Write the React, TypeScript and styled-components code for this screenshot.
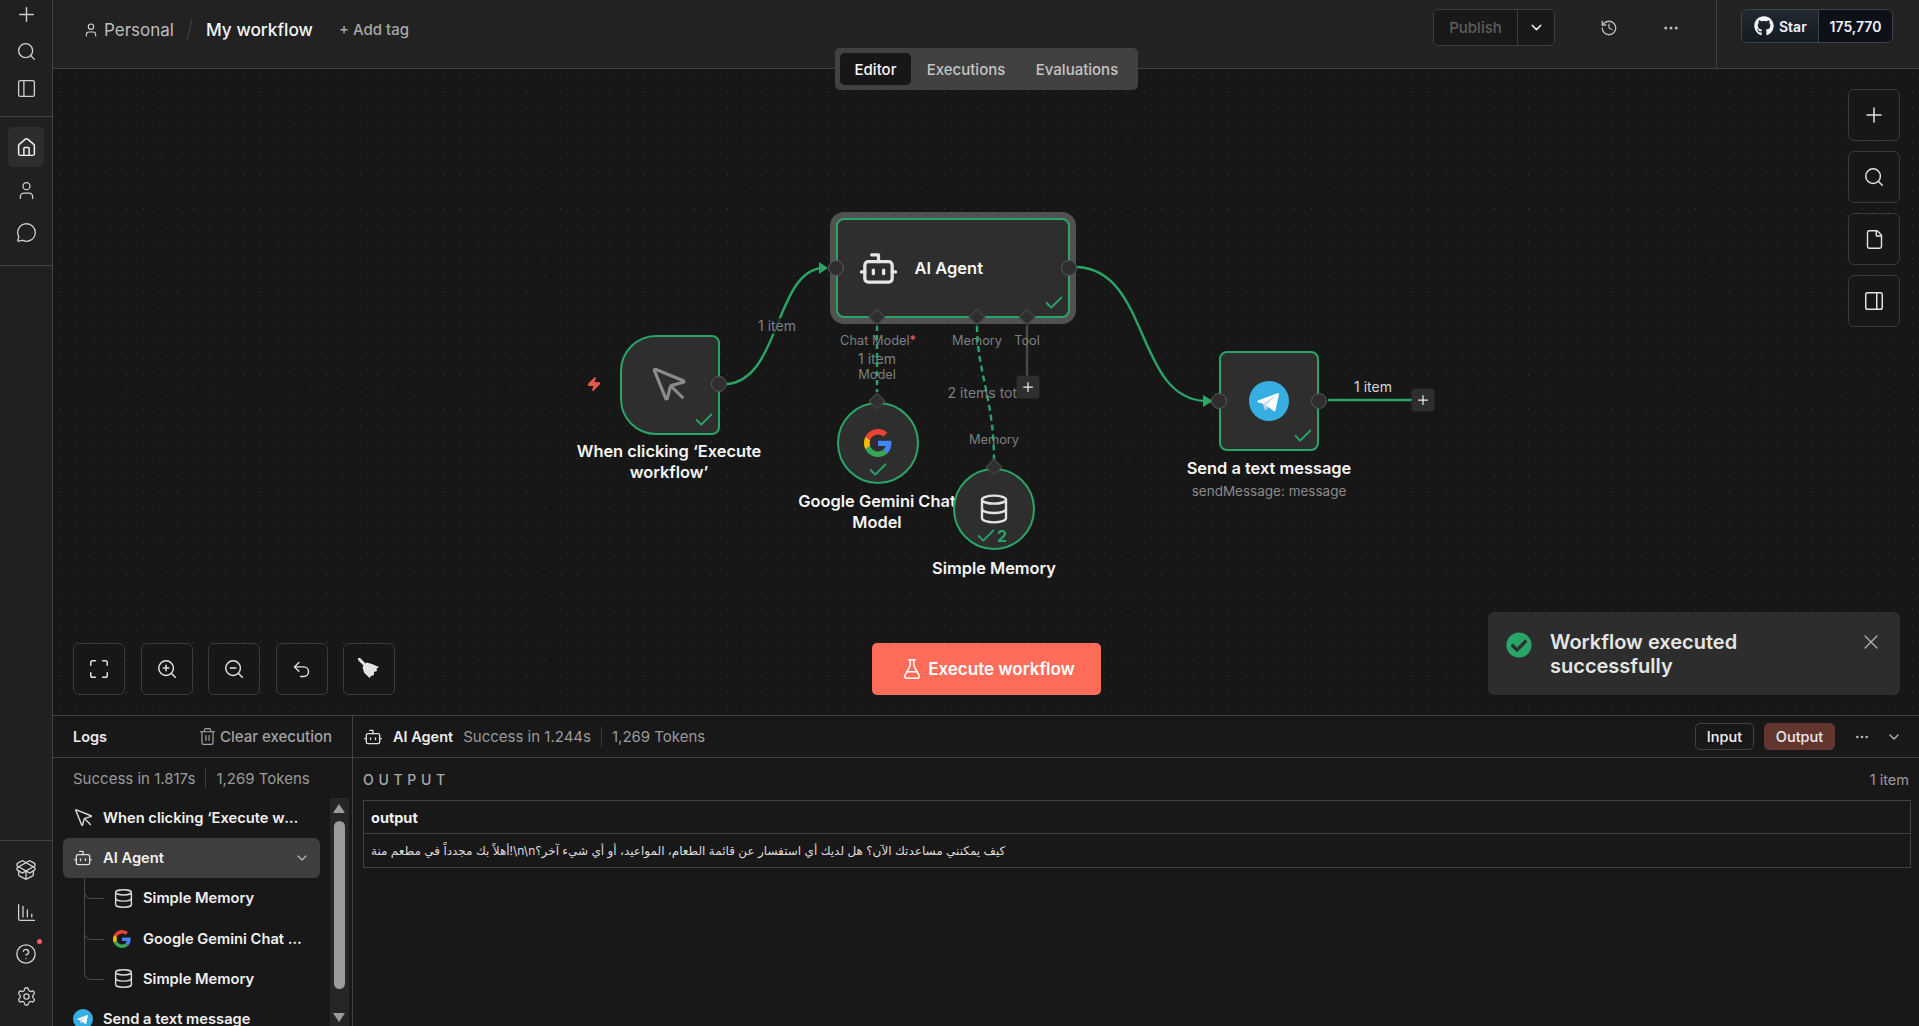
import React from "react";
import styled, { createGlobalStyle } from "styled-components";
import {
  Plus, Search, PanelLeft, PanelRight, House, User, MessageCircle, PackageOpen,
  ChartColumnDecreasing, CircleHelp, Settings, History, Ellipsis, ChevronDown,
  Maximize, ZoomIn, ZoomOut, Undo2, File, Trash2, FlaskConical, Check, X, Bot,
  Database, MousePointer, Zap,
} from "lucide-react";
import { FaCheckCircle, FaGithub } from "react-icons/fa";

const GREEN = "#29a568";
const LINE = "#414141";
// canvas origin in page coordinates, nodes below are given in page coordinates
const OX = 53;
const OY = 69;

const GlobalStyle = createGlobalStyle`
  html, body {
    margin: 0;
    background: #171717;
    font-family: Inter, "Noto Sans", sans-serif;
    color: #e8e8e8;
    overflow: hidden;
  }
  * { box-sizing: border-box; }
`;

const Page = styled.div`
  display: flex;
  width: 1919px;
  height: 1026px;
`;

const Sidebar = styled.aside`
  width: 53px;
  flex-shrink: 0;
  display: flex;
  flex-direction: column;
  background: #202020;
  border-right: 1px solid ${LINE};
`;

const SideGroup = styled.div<{ $h: number; $border?: boolean; $pad: number; $gap: number }>`
  height: ${(p) => p.$h}px;
  display: flex;
  flex-direction: column;
  align-items: center;
  gap: ${(p) => p.$gap}px;
  padding-top: ${(p) => p.$pad}px;
  border-bottom: ${(p) => (p.$border ? `1px solid ${LINE}` : "none")};
`;

const SideSpacer = styled.div`
  flex: 1;
  border-bottom: 1px solid ${LINE};
`;

const SideItem = styled.div<{ $active?: boolean }>`
  position: relative;
  width: 36px;
  height: ${(p) => (p.$active ? 40 : 24)}px;
  margin-bottom: ${(p) => (p.$active ? -7 : 0)}px;
  display: flex;
  align-items: center;
  justify-content: center;
  border-radius: 5px;
  color: ${(p) => (p.$active ? "#f2f2f2" : "#cfcfcf")};
  background: ${(p) => (p.$active ? "#2d2d2d" : "transparent")};
`;

const RedDot = styled.span`
  position: absolute;
  top: -3px;
  right: 2px;
  width: 5px;
  height: 5px;
  border-radius: 50%;
  background: #f0606e;
`;

const Main = styled.div`
  position: relative;
  flex: 1;
  min-width: 0;
  display: flex;
  flex-direction: column;
`;

const Header = styled.header`
  height: 69px;
  flex-shrink: 0;
  display: flex;
  align-items: stretch;
  background: #222222;
  border-bottom: 1px solid ${LINE};
`;

const Breadcrumb = styled.div`
  display: flex;
  align-items: center;
  height: 59px;
  padding-left: 30px;
`;

const Crumb = styled.span<{ $strong?: boolean }>`
  font-size: ${(p) => (p.$strong ? 17.3 : 17)}px;
  color: ${(p) => (p.$strong ? "#f5f5f5" : "#bdbdbd")};
  font-weight: ${(p) => (p.$strong ? 500 : 400)};
`;

const PersonalIcon = styled(User)`
  color: #cfcfcf;
  margin-right: 5px;
`;

const Slash = styled.span`
  width: 1px;
  height: 22px;
  margin: 0 15.5px;
  background: #4a4a4a;
  transform: rotate(12deg);
`;

const AddTag = styled.span`
  margin-left: 26px;
  font-size: 15px;
  font-weight: 500;
  color: #a8a8a8;
`;

const HeaderRight = styled.div`
  margin-left: auto;
  display: flex;
  align-items: flex-start;
  padding-top: 9px;
`;

const PublishGroup = styled.div`
  display: flex;
  width: 122px;
  height: 37px;
  border: 1px solid #3d3d3d;
  border-radius: 5px;
  background: #191919;
  overflow: hidden;
`;

const PublishLabel = styled.span`
  flex: 1;
  display: flex;
  align-items: center;
  justify-content: center;
  font-size: 15px;
  font-weight: 500;
  color: #5e5e5e;
`;

const PublishCaret = styled.span`
  width: 37px;
  display: flex;
  align-items: center;
  justify-content: center;
  color: #e8e8e8;
  border-left: 1px solid #3d3d3d;
`;

const HeaderIcon = styled.span<{ $ml: number }>`
  margin-left: ${(p) => p.$ml}px;
  height: 37px;
  display: flex;
  align-items: center;
  color: #bdbdbd;
`;

const StarSection = styled.div`
  margin-left: 36px;
  width: 203px;
  height: 68px;
  margin-top: -9px;
  padding: 9px 26px 0 24px;
  border-left: 1px solid ${LINE};
`;

const StarBadge = styled.div`
  display: flex;
  height: 34px;
  border: 1px solid #3d444d;
  border-radius: 6px;
  overflow: hidden;
  font-size: 14px;
  font-weight: 600;
  color: #f0f6fc;
`;

const StarLeft = styled.div`
  width: 77px;
  display: flex;
  align-items: center;
  gap: 5px;
  padding-left: 12px;
  background: linear-gradient(180deg, #212830, #151b23);
  border-right: 1px solid #3d444d;
`;

const StarCount = styled.div`
  flex: 1;
  display: flex;
  align-items: center;
  justify-content: center;
  background: #0d1117;
`;

const Tabs = styled.nav`
  position: absolute;
  left: 782px;
  top: 48px;
  z-index: 5;
  width: 303px;
  height: 42px;
  display: flex;
  align-items: center;
  padding: 0 5px;
  background: #414141;
  border-radius: 5px;
  font-size: 15px;
  font-weight: 500;
`;

const Tab = styled.span<{ $active?: boolean; $w: number }>`
  width: ${(p) => p.$w}px;
  height: 32px;
  display: flex;
  align-items: center;
  justify-content: center;
  border-radius: 5px;
  color: ${(p) => (p.$active ? "#f7f7f7" : "#c4c4c4")};
  background: ${(p) => (p.$active ? "#171717" : "transparent")};
`;

const Canvas = styled.section`
  position: relative;
  flex: 1;
  overflow: hidden;
  background-color: #171717;
  background-image: radial-gradient(circle, #424242 0.7px, transparent 0.9px);
  background-size: 16.7px 16.7px;
  background-position: -1.35px -2.35px;
`;

const Edges = styled.svg`
  position: absolute;
  left: 0;
  top: 0;
  width: 1866px;
  height: 646px;
`;

const NodeBox = styled.div<{
  $x: number;
  $y: number;
  $w: number;
  $h: number;
  $radius: string;
  $ring?: boolean;
  $start?: boolean;
}>`
  position: absolute;
  left: ${(p) => p.$x - OX}px;
  top: ${(p) => p.$y - OY}px;
  width: ${(p) => p.$w}px;
  height: ${(p) => p.$h}px;
  display: flex;
  align-items: center;
  justify-content: ${(p) => (p.$start ? "flex-start" : "center")};
  padding-left: ${(p) => (p.$start ? 19.5 : 0)}px;
  background: #2e2e2e;
  border: 2px solid ${GREEN};
  border-radius: ${(p) => p.$radius};
  box-shadow: ${(p) => (p.$ring ? "0 0 0 6px #515151" : "none")};
`;

const NodeCheck = styled.span<{ $right?: number; $bottom?: number }>`
  position: absolute;
  right: ${(p) => p.$right ?? 3}px;
  bottom: ${(p) => p.$bottom ?? 2}px;
  display: flex;
  align-items: center;
  color: ${GREEN};
  font-size: 16px;
  font-weight: 700;
`;

const AgentName = styled.span`
  margin-left: 16px;
  font-size: 16.5px;
  font-weight: 600;
  color: #f5f5f5;
`;

const Placed = styled.div<{ $x: number; $y: number }>`
  position: absolute;
  left: ${(p) => p.$x - OX}px;
  top: ${(p) => p.$y - OY}px;
  transform: translate(-50%, -50%);
`;

const Port = styled(Placed)`
  width: 16px;
  height: 16px;
  border-radius: 50%;
  background: #2e2e2e;
  border: 1px solid #595959;
`;

const Diamond = styled(Placed)`
  width: 12px;
  height: 12px;
  background: #2e2e2e;
  border: 1px solid #4a4a4a;
  transform: translate(-50%, -50%) rotate(45deg);
`;

const Title = styled(Placed)`
  width: 200px;
  text-align: center;
  font-size: 16.4px;
  line-height: 21px;
  font-weight: 600;
  color: #f5f5f5;
`;

const Subtitle = styled(Placed)`
  white-space: nowrap;
  font-size: 13.5px;
  color: #8a8a8a;
`;

const PortLabel = styled(Placed)`
  white-space: nowrap;
  font-size: 12.8px;
  line-height: 16px;
  color: #7c7f84;
`;

const ItemLabel = styled(Placed)<{ $light?: boolean; $solid?: boolean }>`
  white-space: nowrap;
  font-size: 14px;
  line-height: 16px;
  padding: 0 2px;
  color: ${(p) => (p.$light ? "#d6d6d6" : "#7c7f84")};
  background: ${(p) => (p.$solid ? "rgba(23,23,23,.75)" : "transparent")};
`;

const Required = styled.span`
  color: #f0606e;
`;

const AddBox = styled(Placed)`
  width: 23px;
  height: 23px;
  display: flex;
  align-items: center;
  justify-content: center;
  border-radius: 4px;
  background: #2e2e2e;
  color: #ececec;
`;

const Bolt = styled(Placed)`
  display: flex;
  color: #e5594c;
`;

const ToolColumn = styled.div<{ $side: "left" | "right"; $gap: number }>`
  position: absolute;
  display: flex;
  gap: ${(p) => p.$gap}px;
  ${(p) =>
    p.$side === "left"
      ? "left: 20px; bottom: 20px;"
      : "right: 19px; top: 20px; flex-direction: column;"}
`;

const ToolButton = styled.button`
  width: 52px;
  height: 52px;
  display: flex;
  align-items: center;
  justify-content: center;
  padding: 0;
  background: #171717;
  border: 1px solid #3a3a3a;
  border-radius: 6px;
  color: #e4e4e4;
`;

const ExecuteButton = styled.button`
  position: absolute;
  left: 819px;
  bottom: 20px;
  width: 229px;
  height: 52px;
  display: flex;
  align-items: center;
  justify-content: center;
  gap: 5px;
  padding-right: 3px;
  border: 0;
  border-radius: 5px;
  background: #ff6d5a;
  color: #fff;
  font-family: inherit;
  font-size: 17px;
  font-weight: 600;
`;

const Toast = styled.div`
  position: absolute;
  right: 19px;
  bottom: 20px;
  width: 412px;
  height: 83px;
  display: flex;
  align-items: flex-start;
  padding: 18px 17px 0 18px;
  border-radius: 6px;
  background: #2d2d2d;
  color: #e6e6e6;
`;

const ToastIcon = styled(FaCheckCircle)`
  color: ${GREEN};
  flex-shrink: 0;
  margin-top: 2px;
`;

const ToastText = styled.div`
  margin-left: 18px;
  width: 230px;
  font-size: 20px;
  line-height: 24px;
  font-weight: 600;
`;

const ToastClose = styled.span`
  margin-left: auto;
  display: flex;
  color: #b5b5b5;
`;

const LogsPanel = styled.section`
  height: 311px;
  flex-shrink: 0;
  display: flex;
  background: #181818;
  border-top: 1px solid ${LINE};
`;

const LogsColumn = styled.div`
  width: 300px;
  flex-shrink: 0;
  display: flex;
  flex-direction: column;
  border-right: 1px solid ${LINE};
  overflow: hidden;
`;

const PanelHead = styled.div`
  height: 42px;
  flex-shrink: 0;
  display: flex;
  align-items: center;
  border-bottom: 1px solid ${LINE};
`;

const LogsHead = styled(PanelHead)`
  justify-content: space-between;
  padding: 0 20px 0 20px;
`;

const HeadTitle = styled.span`
  font-size: 14.5px;
  font-weight: 600;
  color: #ececec;
`;

const ClearButton = styled.span`
  display: flex;
  align-items: center;
  gap: 3px;
  font-size: 15px;
  font-weight: 500;
  color: #a3a3a3;
`;

const Stats = styled.div`
  display: flex;
  align-items: center;
  font-size: 15px;
  color: #9a9a9a;
`;

const StatDivider = styled.span`
  width: 1px;
  height: 20px;
  margin: 0 10px;
  background: #3d3d3d;
`;

const LogsStats = styled(Stats)`
  height: 40px;
  flex-shrink: 0;
  padding-left: 20px;
`;

const TreeArea = styled.div`
  flex: 1;
  min-height: 0;
  display: flex;
`;

const TreeList = styled.div`
  width: 257px;
  margin-left: 10px;
`;

const TreeRow = styled.div<{ $active?: boolean; $child?: boolean; $last?: boolean }>`
  position: relative;
  height: 40.2px;
  display: flex;
  align-items: center;
  padding: 0 17px 0 ${(p) => (p.$child ? 50 : 10)}px;
  border-radius: 6px;
  background: ${(p) => (p.$active ? "#3e3e3e" : "transparent")};
  ${(p) =>
    p.$child
      ? `
  &::before {
    content: "";
    position: absolute;
    left: 21px;
    top: 0;
    width: 19px;
    height: 20px;
    border-left: 1.5px solid #4a4a4a;
    border-bottom: 1.5px solid #4a4a4a;
    border-bottom-left-radius: 7px;
  }`
      : ""}
  ${(p) =>
    p.$child && !p.$last
      ? `
  &::after {
    content: "";
    position: absolute;
    left: 21px;
    top: 0;
    bottom: 0;
    border-left: 1.5px solid #4a4a4a;
  }`
      : ""}
`;

const TreeIcon = styled.span`
  width: 30px;
  flex-shrink: 0;
  display: flex;
  color: #dcdcdc;
`;

const TreeText = styled.span`
  flex: 1;
  min-width: 0;
  white-space: nowrap;
  overflow: hidden;
  text-overflow: ellipsis;
  font-size: 14.7px;
  font-weight: 600;
  color: #f0f0f0;
`;

const TreeCaret = styled(ChevronDown)`
  position: absolute;
  right: 10px;
  color: #b5b5b5;
`;

const ScrollTrack = styled.div`
  position: relative;
  width: 19px;
  margin-left: 10px;
  background: #262626;
`;

const ScrollThumb = styled.div`
  position: absolute;
  left: 4px;
  top: 23px;
  width: 11px;
  height: 168px;
  border-radius: 6px;
  background: #9c9c9c;
`;

const ScrollArrow = styled.span<{ $down?: boolean }>`
  position: absolute;
  left: 3px;
  ${(p) => (p.$down ? "bottom: 4px;" : "top: 6px;")}
  width: 0;
  height: 0;
  border-left: 6.5px solid transparent;
  border-right: 6.5px solid transparent;
  ${(p) => (p.$down ? "border-top: 9px solid #9c9c9c;" : "border-bottom: 9px solid #9c9c9c;")}
`;

const OutputColumn = styled.div`
  flex: 1;
  min-width: 0;
  display: flex;
  flex-direction: column;
`;

const OutputHead = styled(PanelHead)`
  padding: 0 17px 0 10px;
`;

const OutputName = styled.span`
  margin-left: 10px;
  margin-right: 10px;
  font-size: 14.5px;
  font-weight: 600;
  color: #ececec;
`;

const HeadActions = styled.div`
  margin-left: auto;
  display: flex;
  align-items: center;
`;

const ModeButton = styled.span<{ $on?: boolean; $w: number }>`
  width: ${(p) => p.$w}px;
  height: 27px;
  margin-right: 10px;
  display: flex;
  align-items: center;
  justify-content: center;
  border-radius: 5px;
  font-size: 14.5px;
  font-weight: 500;
  color: ${(p) => (p.$on ? "#ececec" : "#f2f2f2")};
  background: ${(p) => (p.$on ? "#63352f" : "#181818")};
  border: 1px solid ${(p) => (p.$on ? "#63352f" : "#414141")};
`;

const HeadIcon = styled.span<{ $ml: number }>`
  margin-left: ${(p) => p.$ml}px;
  display: flex;
  color: #b5b5b5;
`;

const OutputBar = styled.div`
  height: 42px;
  flex-shrink: 0;
  display: flex;
  align-items: center;
  justify-content: space-between;
  padding: 0 10px;
`;

const OutputTitle = styled.span`
  font-size: 14px;
  font-weight: 500;
  letter-spacing: 4.7px;
  color: #a8a8a8;
`;

const ItemCount = styled.span`
  font-size: 14.5px;
  color: #9a9a9a;
`;

const DataTable = styled.div`
  margin: 0 8px 0 10px;
  border: 1px solid ${LINE};
`;

const DataHead = styled.div`
  height: 33px;
  display: flex;
  align-items: center;
  padding-left: 7px;
  font-size: 14.5px;
  font-weight: 700;
  color: #f0f0f0;
  border-bottom: 1px solid ${LINE};
`;

const DataCell = styled.div`
  height: 33px;
  display: flex;
  align-items: center;
  padding-left: 7px;
  font-family: Inter, "DejaVu Sans", sans-serif;
  font-size: 12px;
  color: #dcdcdc;
  white-space: nowrap;
`;

const GoogleIcon = ({ size }: { size: number }) => (
  <svg width={size} height={size} viewBox="0 0 48 48">
    <path fill="#EA4335" d="M24 9.5c3.54 0 6.71 1.22 9.21 3.6l6.85-6.85C35.9 2.38 30.47 0 24 0 14.62 0 6.51 5.38 2.56 13.22l7.98 6.19C12.43 13.72 17.74 9.5 24 9.5z" />
    <path fill="#4285F4" d="M46.98 24.55c0-1.57-.15-3.09-.38-4.55H24v9.02h12.94c-.58 2.96-2.26 5.48-4.78 7.18l7.73 6c4.51-4.18 7.09-10.36 7.09-17.65z" />
    <path fill="#FBBC05" d="M10.53 28.59c-.48-1.45-.76-2.99-.76-4.59s.27-3.14.76-4.59l-7.98-6.19C.92 16.46 0 20.12 0 24c0 3.88.92 7.54 2.56 10.78l7.97-6.19z" />
    <path fill="#34A853" d="M24 48c6.48 0 11.93-2.13 15.89-5.81l-7.73-6c-2.15 1.45-4.92 2.3-8.16 2.3-6.26 0-11.57-4.22-13.47-9.91l-7.98 6.19C6.51 42.62 14.62 48 24 48z" />
  </svg>
);

const TelegramIcon = ({ size }: { size: number }) => (
  <svg width={size} height={size} viewBox="0 0 240 240">
    <circle cx="120" cy="120" r="120" fill="#37aee2" />
    <path fill="#c8daea" d="M98 175c-3.888 0-3.227-1.468-4.568-5.17L82 132.207 170 80" />
    <path fill="#a9c9dd" d="M98 175c3 0 4.325-1.372 6-3l16-15.558-19.958-12.035" />
    <path fill="#fff" d="M100.04 144.41l48.36 35.729c5.519 3.045 9.501 1.468 10.876-5.123l19.685-92.763c2.015-8.08-3.08-11.746-8.36-9.349l-115.59 44.571c-7.89 3.165-7.843 7.567-1.438 9.528l29.663 9.259 68.673-43.325c3.242-1.966 6.218-.91 3.776 1.258" />
  </svg>
);

const BroomIcon = () => (
  <svg width="22" height="22" viewBox="0 0 22 22" fill="currentColor">
    <path d="M1 1l5.5 5.5" stroke="currentColor" strokeWidth="3" strokeLinecap="round" />
    <path d="M8.5 4.5L14 6l7 3-2.5 2 .5 2-3 1v3l-3 1-1.500 2L6 14.500 4.500 9z" />
  </svg>
);

const ARABIC =
  "أهلاً بك مجدداً في مطعم منة!\\n\\nكيف يمكنني مساعدتك الآن؟ هل لديك أي استفسار عن قائمة الطعام، المواعيد، أو أي شيء آخر؟";

export default function App() {
  return (
    <Page>
      <GlobalStyle />
      <Sidebar>
        <SideGroup $h={117} $border $pad={2} $gap={13}>
          <SideItem><Plus size={23} strokeWidth={1.5} /></SideItem>
          <SideItem><Search size={21} strokeWidth={1.5} /></SideItem>
          <SideItem><PanelLeft size={21} strokeWidth={1.5} /></SideItem>
        </SideGroup>
        <SideGroup $h={149} $border $pad={10} $gap={18}>
          <SideItem $active><House size={21} strokeWidth={1.7} /></SideItem>
          <SideItem><User size={21} strokeWidth={1.5} /></SideItem>
          <SideItem><MessageCircle size={21} strokeWidth={1.5} /></SideItem>
        </SideGroup>
        <SideSpacer />
        <SideGroup $h={185} $pad={17} $gap={18}>
          <SideItem><PackageOpen size={22} strokeWidth={1.5} /></SideItem>
          <SideItem><ChartColumnDecreasing size={21} strokeWidth={1.5} /></SideItem>
          <SideItem><CircleHelp size={22} strokeWidth={1.5} /><RedDot /></SideItem>
          <SideItem><Settings size={21} strokeWidth={1.5} /></SideItem>
        </SideGroup>
      </Sidebar>

      <Main>
        <Header>
          <Breadcrumb>
            <PersonalIcon size={16} strokeWidth={1.7} />
            <Crumb>Personal</Crumb>
            <Slash />
            <Crumb $strong>My workflow</Crumb>
            <AddTag>+ Add tag</AddTag>
          </Breadcrumb>
          <HeaderRight>
            <PublishGroup>
              <PublishLabel>Publish</PublishLabel>
              <PublishCaret><ChevronDown size={17} /></PublishCaret>
            </PublishGroup>
            <HeaderIcon $ml={45}><History size={18} strokeWidth={1.7} /></HeaderIcon>
            <HeaderIcon $ml={44}><Ellipsis size={18} /></HeaderIcon>
            <StarSection>
              <StarBadge>
                <StarLeft><FaGithub size={20} />Star</StarLeft>
                <StarCount>175,770</StarCount>
              </StarBadge>
            </StarSection>
          </HeaderRight>
        </Header>

        <Tabs>
          <Tab $active $w={71}>Editor</Tab>
          <Tab $w={110}>Executions</Tab>
          <Tab $w={112}>Evaluations</Tab>
        </Tabs>

        <Canvas>
          <Edges viewBox={`${OX} ${OY} 1866 646`} fill="none">
            <path d="M727 384 C780 380 775 272 822 268" stroke={GREEN} strokeWidth="2.4" />
            <polygon points="828,268 819,262 819,274" fill={GREEN} />
            <path d="M1077 267 C1150 270 1135 398 1205 401" stroke={GREEN} strokeWidth="2.4" />
            <polygon points="1213,401 1203,395 1203,407" fill={GREEN} />
            <path d="M1328 400 H1412" stroke={GREEN} strokeWidth="2.4" />
            <path d="M877 326 V392" stroke={GREEN} strokeWidth="2.4" strokeDasharray="5 4" />
            <path d="M977 326 C977 370 994 400 994 460" stroke={GREEN} strokeWidth="2.4" strokeDasharray="6 4" />
            <path d="M1027 326 V378" stroke="#4a4a4a" strokeWidth="2.4" />
          </Edges>

          <Bolt $x={594} $y={384}><Zap size={15} fill="currentColor" /></Bolt>
          <NodeBox $x={620} $y={335} $w={100} $h={100} $radius="36px 8px 8px 36px">
            <MousePointer size={42} color="#8b8b8b" strokeWidth={1.8} />
            <NodeCheck><Check size={22} strokeWidth={2} /></NodeCheck>
          </NodeBox>
          <Port $x={719} $y={384} />
          <ItemLabel $x={777} $y={326} $solid>1 item</ItemLabel>
          <Title $x={669} $y={462}>When clicking ‘Execute workflow’</Title>

          <NodeBox $x={836} $y={218} $w={234} $h={100} $radius="8px" $ring $start>
            <Bot size={41} color="#e6e6e6" strokeWidth={1.9} />
            <AgentName>AI Agent</AgentName>
            <NodeCheck><Check size={22} strokeWidth={2} /></NodeCheck>
          </NodeBox>
          <Port $x={836} $y={268} />
          <Port $x={1069} $y={268} />
          <Diamond $x={877} $y={317} />
          <Diamond $x={977} $y={317} />
          <Diamond $x={1027} $y={317} />
          <PortLabel $x={878} $y={341}>Chat Model<Required>*</Required></PortLabel>
          <PortLabel $x={977} $y={341}>Memory</PortLabel>
          <PortLabel $x={1027} $y={341}>Tool</PortLabel>
          <ItemLabel $x={877} $y={359}>1 item</ItemLabel>
          <PortLabel $x={877} $y={375}>Model</PortLabel>

          <NodeBox $x={837} $y={402} $w={82} $h={82} $radius="50%">
            <GoogleIcon size={28} />
            <NodeCheck $right={28} $bottom={1}><Check size={22} strokeWidth={2} /></NodeCheck>
          </NodeBox>
          <Diamond $x={877} $y={401} />
          <Title $x={877} $y={512}>Google Gemini Chat Model</Title>

          <ItemLabel $x={988} $y={393}>2 items total</ItemLabel>
          <AddBox $x={1028} $y={387}><Plus size={15} /></AddBox>
          <PortLabel $x={994} $y={440}>Memory</PortLabel>
          <NodeBox $x={953} $y={468} $w={82} $h={82} $radius="50%">
            <Database size={32} color="#e2e2e2" strokeWidth={1.8} />
            <NodeCheck $right={26} $bottom={1}><Check size={22} strokeWidth={2} />2</NodeCheck>
          </NodeBox>
          <Diamond $x={994} $y={467} />
          <Title $x={994} $y={568}>Simple Memory</Title>

          <NodeBox $x={1219} $y={351} $w={100} $h={100} $radius="8px">
            <TelegramIcon size={40} />
            <NodeCheck><Check size={22} strokeWidth={2} /></NodeCheck>
          </NodeBox>
          <Port $x={1219} $y={401} />
          <Port $x={1319} $y={401} />
          <ItemLabel $x={1373} $y={387} $light>1 item</ItemLabel>
          <AddBox $x={1423} $y={400}><Plus size={15} /></AddBox>
          <Title $x={1269} $y={468}>Send a text message</Title>
          <Subtitle $x={1269} $y={491}>sendMessage: message</Subtitle>

          <ToolColumn $side="right" $gap={10}>
            <ToolButton><Plus size={24} strokeWidth={1.5} /></ToolButton>
            <ToolButton><Search size={22} strokeWidth={1.6} /></ToolButton>
            <ToolButton><File size={21} strokeWidth={1.6} /></ToolButton>
            <ToolButton><PanelRight size={22} strokeWidth={1.6} /></ToolButton>
          </ToolColumn>
          <ToolColumn $side="left" $gap={15.5}>
            <ToolButton><Maximize size={22} strokeWidth={1.6} /></ToolButton>
            <ToolButton><ZoomIn size={22} strokeWidth={1.6} /></ToolButton>
            <ToolButton><ZoomOut size={22} strokeWidth={1.6} /></ToolButton>
            <ToolButton><Undo2 size={21} strokeWidth={1.6} /></ToolButton>
            <ToolButton><BroomIcon /></ToolButton>
          </ToolColumn>
          <ExecuteButton><FlaskConical size={22} strokeWidth={1.6} />Execute workflow</ExecuteButton>
          <Toast>
            <ToastIcon size={26} />
            <ToastText>Workflow executed successfully</ToastText>
            <ToastClose><X size={24} strokeWidth={1.2} /></ToastClose>
          </Toast>
        </Canvas>

        <LogsPanel>
          <LogsColumn>
            <LogsHead>
              <HeadTitle>Logs</HeadTitle>
              <ClearButton><Trash2 size={19} strokeWidth={1.5} />Clear execution</ClearButton>
            </LogsHead>
            <LogsStats>Success in 1.817s<StatDivider />1,269 Tokens</LogsStats>
            <TreeArea>
              <TreeList>
                <TreeRow>
                  <TreeIcon><MousePointer size={22} strokeWidth={1.5} /></TreeIcon>
                  <TreeText>When clicking ‘Execute workflow’</TreeText>
                </TreeRow>
                <TreeRow $active>
                  <TreeIcon><Bot size={20} strokeWidth={1.6} /></TreeIcon>
                  <TreeText>AI Agent</TreeText>
                  <TreeCaret size={16} />
                </TreeRow>
                <TreeRow $child>
                  <TreeIcon><Database size={21} strokeWidth={1.6} /></TreeIcon>
                  <TreeText>Simple Memory</TreeText>
                </TreeRow>
                <TreeRow $child>
                  <TreeIcon><GoogleIcon size={18} /></TreeIcon>
                  <TreeText>Google Gemini Chat Model</TreeText>
                </TreeRow>
                <TreeRow $child $last>
                  <TreeIcon><Database size={21} strokeWidth={1.6} /></TreeIcon>
                  <TreeText>Simple Memory</TreeText>
                </TreeRow>
                <TreeRow>
                  <TreeIcon><TelegramIcon size={20} /></TreeIcon>
                  <TreeText>Send a text message</TreeText>
                </TreeRow>
              </TreeList>
              <ScrollTrack>
                <ScrollArrow />
                <ScrollThumb />
                <ScrollArrow $down />
              </ScrollTrack>
            </TreeArea>
          </LogsColumn>
          <OutputColumn>
            <OutputHead>
              <Bot size={20} strokeWidth={1.6} color="#dcdcdc" />
              <OutputName>AI Agent</OutputName>
              <Stats>Success in 1.244s<StatDivider />1,269 Tokens</Stats>
              <HeadActions>
                <ModeButton $w={59}>Input</ModeButton>
                <ModeButton $w={71} $on>Output</ModeButton>
                <HeadIcon $ml={9}><Ellipsis size={16} /></HeadIcon>
                <HeadIcon $ml={16}><ChevronDown size={16} /></HeadIcon>
              </HeadActions>
            </OutputHead>
            <OutputBar>
              <OutputTitle>OUTPUT</OutputTitle>
              <ItemCount>1 item</ItemCount>
            </OutputBar>
            <DataTable>
              <DataHead>output</DataHead>
              <DataCell>{ARABIC}</DataCell>
            </DataTable>
          </OutputColumn>
        </LogsPanel>
      </Main>
    </Page>
  );
}
